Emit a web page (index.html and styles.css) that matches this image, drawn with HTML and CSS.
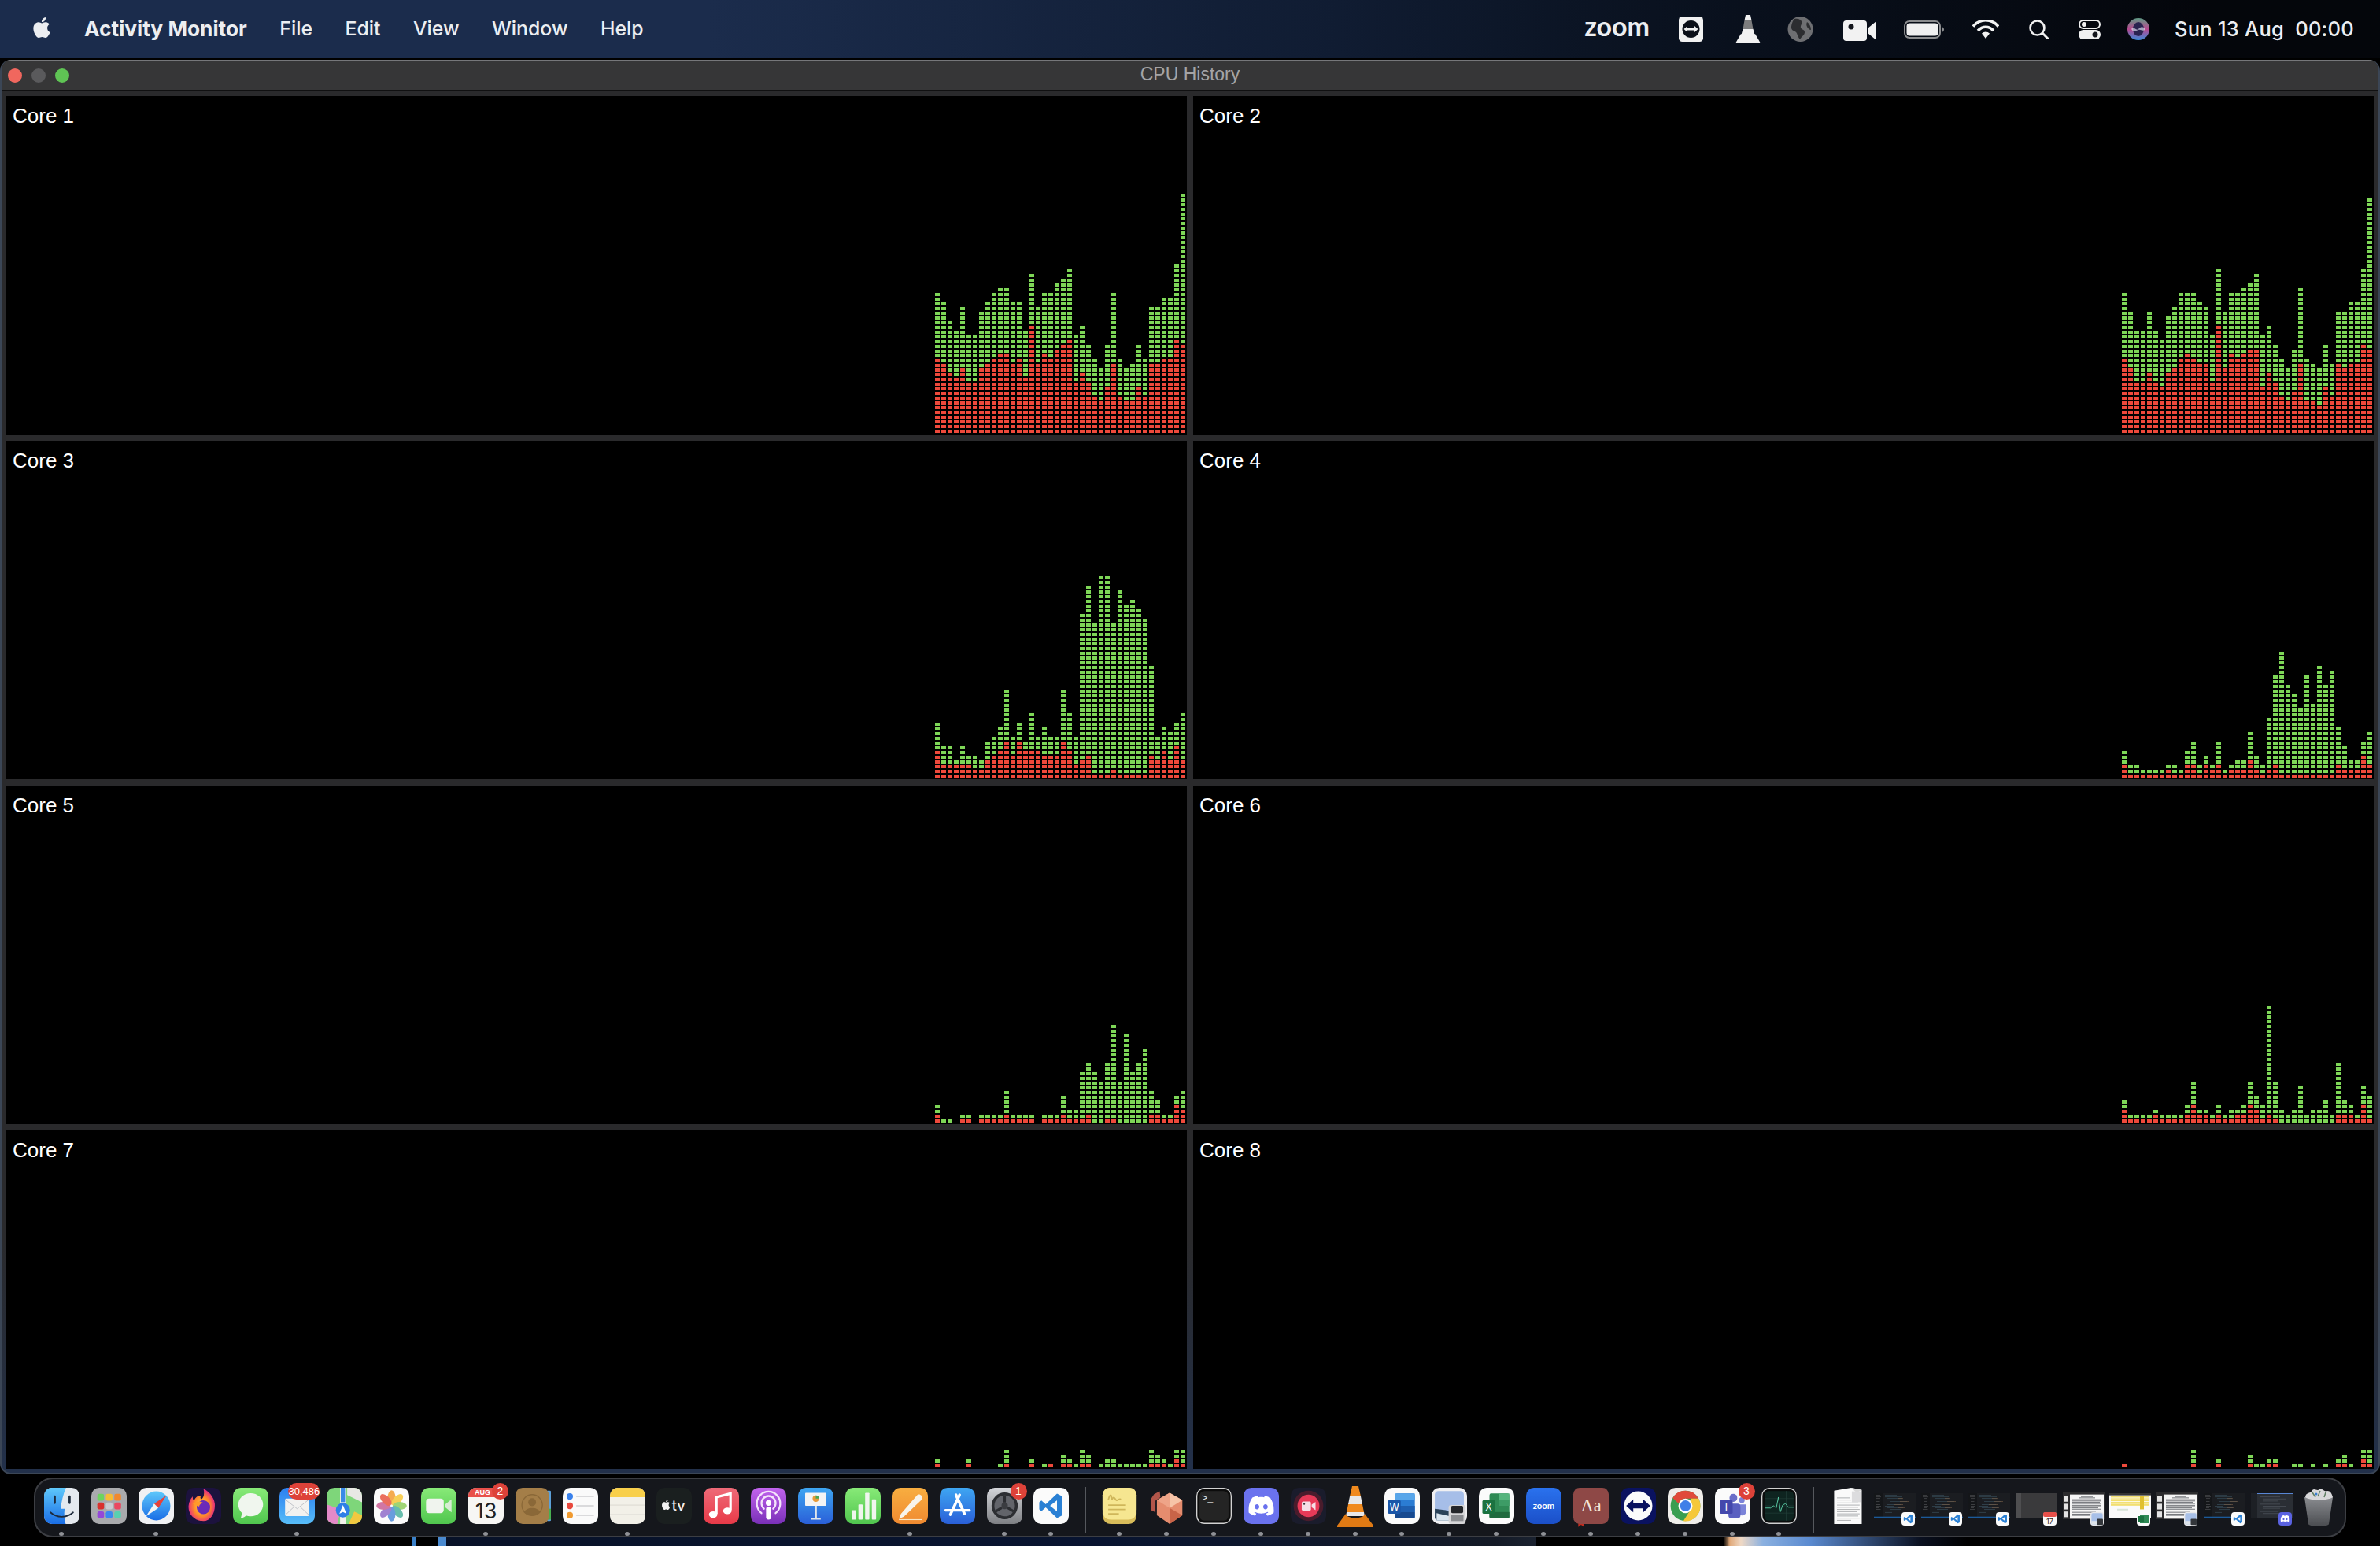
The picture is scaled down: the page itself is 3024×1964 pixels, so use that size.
FILE: index.html
```html
<!DOCTYPE html>
<html lang="en">
<head>
<meta charset="utf-8">
<title>CPU History</title>
<link rel="stylesheet" href="styles.css">
</head>
<body>
<svg class="defs" aria-hidden="true">
  <defs>
    <linearGradient id="gFinder" x1="0" y1="0" x2="0" y2="1"><stop offset="0" stop-color="#5ec8fb"/><stop offset="1" stop-color="#1a6ee6"/></linearGradient>
    <linearGradient id="gBlue" x1="0" y1="0" x2="0" y2="1"><stop offset="0" stop-color="#3ea6f2"/><stop offset="1" stop-color="#2a5fd8"/></linearGradient>
    <linearGradient id="gMail" x1="0" y1="0" x2="0" y2="1"><stop offset="0" stop-color="#2b7ff0"/><stop offset="1" stop-color="#58bdf8"/></linearGradient>
    <linearGradient id="gGreen" x1="0" y1="0" x2="0" y2="1"><stop offset="0" stop-color="#88ea78"/><stop offset="1" stop-color="#50c64e"/></linearGradient>
    <linearGradient id="gMusic" x1="0" y1="0" x2="0" y2="1"><stop offset="0" stop-color="#ee6a78"/><stop offset="1" stop-color="#e83a48"/></linearGradient>
    <linearGradient id="gPod" x1="0" y1="0" x2="0" y2="1"><stop offset="0" stop-color="#c264ee"/><stop offset="1" stop-color="#7a30b8"/></linearGradient>
    <linearGradient id="gPages" x1="0" y1="0" x2="0" y2="1"><stop offset="0" stop-color="#f8ae40"/><stop offset="1" stop-color="#f08a30"/></linearGradient>
    <linearGradient id="gGray" x1="0" y1="0" x2="0" y2="1"><stop offset="0" stop-color="#d4d6da"/><stop offset="1" stop-color="#7e8084"/></linearGradient>
    <linearGradient id="gZoom" x1="0" y1="0" x2="0" y2="1"><stop offset="0" stop-color="#2a72ee"/><stop offset="1" stop-color="#1b4fc8"/></linearGradient>
    <linearGradient id="gTrash" x1="0" y1="0" x2="0" y2="1"><stop offset="0" stop-color="#8a8c90"/><stop offset="1" stop-color="#4a4c50"/></linearGradient>
    <linearGradient id="gSiri" x1="0" y1="0" x2="0" y2="1"><stop offset="0" stop-color="#5f9c86"/><stop offset=".5" stop-color="#b8488f"/><stop offset="1" stop-color="#3a8ad8"/></linearGradient>
    <radialGradient id="gFox" cx=".5" cy=".55"><stop offset="0" stop-color="#ffd84a"/><stop offset=".6" stop-color="#ff8a2a"/><stop offset="1" stop-color="#e8307a"/></radialGradient>
    <symbol id="vsLogo" viewBox="0 0 100 100"><path fill-rule="evenodd" fill="#2a80d4" d="M72 6 92 16V84L72 94 30 56 14 69 6 63V37L14 31 30 44ZM72 30 46 50 72 70Z"/></symbol>
    <symbol id="discordLogo" viewBox="0 0 24 24"><path fill="#fff" d="M20.317 4.37a19.79 19.79 0 0 0-4.885-1.515.074.074 0 0 0-.079.037c-.211.375-.445.865-.608 1.25-1.845-.277-3.68-.277-5.487 0-.164-.394-.406-.875-.618-1.25a.077.077 0 0 0-.079-.037 19.74 19.74 0 0 0-4.885 1.515.07.07 0 0 0-.032.028C.533 9.046-.319 13.58.099 18.058a.082.082 0 0 0 .031.056c2.053 1.508 4.041 2.423 5.993 3.03a.078.078 0 0 0 .084-.028c.462-.63.873-1.295 1.226-1.994a.076.076 0 0 0-.042-.106c-.653-.248-1.274-.55-1.872-.892a.077.077 0 0 1-.008-.128c.126-.094.252-.192.372-.291a.074.074 0 0 1 .078-.011c3.928 1.794 8.18 1.794 12.061 0a.074.074 0 0 1 .079.01c.12.099.246.198.373.292a.077.077 0 0 1-.007.128c-.598.35-1.219.645-1.873.891a.077.077 0 0 0-.041.107c.36.698.772 1.363 1.225 1.993a.076.076 0 0 0 .084.029c1.961-.607 3.95-1.522 6.002-3.03a.077.077 0 0 0 .032-.055c.5-5.177-.838-9.674-3.549-13.66a.061.061 0 0 0-.031-.029ZM8.02 15.331c-1.183 0-2.157-1.086-2.157-2.419 0-1.333.956-2.419 2.157-2.419 1.211 0 2.176 1.095 2.157 2.42 0 1.332-.956 2.418-2.157 2.418Zm7.975 0c-1.183 0-2.157-1.086-2.157-2.419 0-1.333.955-2.419 2.157-2.419 1.21 0 2.176 1.095 2.157 2.42 0 1.332-.946 2.418-2.157 2.418Z"/></symbol>
    <symbol id="appleLogo" viewBox="0 0 24 24"><path d="M12.152 6.896c-.948 0-2.415-1.078-3.96-1.04-2.04.027-3.91 1.183-4.961 3.014-2.117 3.675-.546 9.103 1.519 12.09 1.013 1.454 2.208 3.09 3.792 3.039 1.52-.065 2.09-.987 3.935-.987 1.831 0 2.35.987 3.96.948 1.637-.026 2.676-1.48 3.676-2.948 1.156-1.688 1.636-3.325 1.662-3.415-.039-.013-3.182-1.221-3.22-4.857-.026-3.04 2.48-4.494 2.597-4.559-1.429-2.09-3.623-2.324-4.39-2.376-2-.156-3.675 1.09-4.61 1.09zM15.53 3.83c.843-1.012 1.4-2.427 1.245-3.83-1.207.052-2.662.805-3.532 1.818-.78.896-1.454 2.338-1.273 3.714 1.338.104 2.715-.688 3.559-1.701"/></symbol>
    <symbol id="codeThumb" viewBox="0 0 106 94" preserveAspectRatio="none">
      <rect width="106" height="94" fill="#1b1d21"/><rect width="22" height="94" fill="#141619"/>
      <path d="M4 8h12M4 14h14M6 20h10M6 26h12M6 32h9M4 38h13M6 44h10M6 50h12M6 56h8M4 62h13" stroke="#55575b" stroke-width="1.500"/>
      <path d="M28 8h30M28 14h44M34 20h38M34 26h26M40 32h44M40 38h30M34 44h36M28 50h22M34 56h40M40 62h28M40 68h34M28 74h18" stroke="#3c5462" stroke-width="1.500"/>
      <path d="M60 20h14M66 32h22M52 44h22M60 56h18" stroke="#7a6048" stroke-width="1.500"/>
      <rect y="90" width="106" height="4" fill="#1b5a9a"/>
    </symbol>
    <symbol id="docThumb" viewBox="0 0 106 104" preserveAspectRatio="none">
      <rect width="106" height="104" fill="#2c2c2e"/>
      <rect x="18" y="8" width="86" height="94" fill="#f6f6f6"/>
      <path d="M46 16h30M40 21h42M24 28h74M24 33h74M24 38h70M24 43h74M24 50h74M24 55h74M24 60h66M24 65h74M24 72h74M24 77h60M24 84h74M24 89h50" stroke="#55585e" stroke-width="2"/>
      <rect x="2" y="14" width="12" height="22" fill="#e4e4e4"/><rect x="2" y="44" width="12" height="22" fill="#e4e4e4"/><rect x="2" y="74" width="12" height="22" fill="#e4e4e4"/>
    </symbol>
    <symbol id="previewBadge" viewBox="0 0 100 100">
      <rect width="100" height="100" rx="20" fill="#e8e8ea"/><rect x="8" y="8" width="84" height="84" rx="10" fill="#a8c0e8"/><path d="M8 66h84v26H8z" fill="#dfe4ea"/><rect x="50" y="50" width="44" height="46" rx="6" fill="#33363a"/>
    </symbol>
  </defs>
</svg>

<header class="menubar">
  <svg class="apple" aria-hidden="true"><use href="#appleLogo"/></svg>
  <nav class="menus">
    <span class="app-name">Activity Monitor</span>
    <span>File</span><span>Edit</span><span>View</span><span>Window</span><span>Help</span>
  </nav>
  <div class="status">
    <span class="st-zoom">zoom</span>
    <svg class="st st-tv" viewBox="0 0 31 32"><rect width="31" height="32" rx="4.5" fill="#f1f1f1"/><circle cx="15.5" cy="16" r="11" fill="#0b0f18"/><path d="M6.5 16 11 12v2.6h9V12l4.5 4-4.5 4v-2.6h-9V20z" fill="#f1f1f1"/></svg>
    <svg class="st st-vlc" viewBox="0 0 32 36"><path d="M13 0h6l1.500 7h-9z" fill="#f1f1f1"/><path d="M11.500 7h9l2 11h-13z" fill="#7d7d7d"/><path d="M9.500 18h13l2 7h-17z" fill="#f1f1f1"/><path d="M7 24c3 2 15 2 18 0l7 12H0z" fill="#f1f1f1"/></svg>
    <svg class="st st-globe" viewBox="0 0 33 32"><circle cx="16.500" cy="16" r="16" fill="#6e6f72"/><path d="M9 3c4-1 7 0 9 3s-2 5-1 8 5 2 5 6-4 5-6 9c-3-3-3-7-5-9s-6-2-6-6 2-9 4-11zM25 7c3 2 5 6 5 10-2 0-4-2-5-4s-1-4 0-6z" fill="#2c2d30"/></svg>
    <svg class="st st-video" viewBox="0 0 42 26"><rect width="30" height="26" rx="4" fill="#f2f2f2"/><path d="M31 10 42 1v24L31 16z" fill="#f2f2f2"/><circle cx="10" cy="8" r="3.500" fill="#14161c"/></svg>
    <svg class="st st-batt" viewBox="0 0 51 23"><rect x="1" y="1" width="45" height="21" rx="6" fill="none" stroke="#8b8c8e" stroke-width="2"/><rect x="3.500" y="3.500" width="40" height="16" rx="4" fill="#f0f0f0"/><path d="M48 8c2 .5 3 2 3 3.500s-1 3-3 3.500z" fill="#8b8c8e"/></svg>
    <svg class="st st-wifi" viewBox="0 0 34 24"><path d="M1 8.500C10-2 24-2 33 8.500M7 14c6-6.500 14-6.500 20 0" fill="none" stroke="#f2f2f2" stroke-width="3.500"/><path d="M12 17.500c3-2.800 7-2.800 10 0L17 24z" fill="#f2f2f2"/></svg>
    <svg class="st st-search" viewBox="0 0 26 25"><circle cx="10.500" cy="10.500" r="9" fill="none" stroke="#f0f0f0" stroke-width="2.600"/><path d="m17 17 8 8" stroke="#f0f0f0" stroke-width="3"/></svg>
    <svg class="st st-ctrl" viewBox="0 0 28 25"><rect x="1" y="1" width="26" height="10" rx="5" fill="none" stroke="#f0f0f0" stroke-width="2"/><circle cx="7" cy="6" r="3" fill="#f0f0f0"/><rect y="13" width="28" height="12" rx="6" fill="#f0f0f0"/><circle cx="21" cy="19" r="3.500" fill="#14161c"/></svg>
    <svg class="st st-siri" viewBox="0 0 28 28"><circle cx="14" cy="14" r="14" fill="url(#gSiri)"/><ellipse cx="14" cy="14" rx="7" ry="9" fill="#2a2350"/><path d="M5 14c3-5 6 3 9 0s5-4 9 0c-3 4-6 0-9 1s-6 4-9-1z" fill="#d8d8ea" opacity=".7"/></svg>
    <span class="clock">Sun 13 Aug&nbsp;&nbsp;00:00</span>
  </div>
</header>

<main class="window">
  <div class="titlebar">
    <div class="lights"><i class="light red"></i><i class="light off"></i><i class="light green"></i></div>
    <span class="win-title">CPU History</span>
  </div>
  <div class="grid">
    <section class="panel"><h2>Core 1</h2><div class="graph" data-core="0"></div></section>
    <section class="panel"><h2>Core 2</h2><div class="graph" data-core="1"></div></section>
    <section class="panel"><h2>Core 3</h2><div class="graph" data-core="2"></div></section>
    <section class="panel"><h2>Core 4</h2><div class="graph" data-core="3"></div></section>
    <section class="panel"><h2>Core 5</h2><div class="graph" data-core="4"></div></section>
    <section class="panel"><h2>Core 6</h2><div class="graph" data-core="5"></div></section>
    <section class="panel"><h2>Core 7</h2><div class="graph" data-core="6"></div></section>
    <section class="panel"><h2>Core 8</h2><div class="graph" data-core="7"></div></section>
  </div>
</main>

<footer class="dock">
  <div class="item run"><svg viewBox="0 0 100 100" preserveAspectRatio="none"><rect width="100" height="100" rx="22" fill="#e4e9ef"/><path d="M22 0H62C54 18 49 38 47 58H58C56 74 57 88 61 100H22A22 22 0 0 1 0 78V22A22 22 0 0 1 22 0Z" fill="url(#gFinder)"/><path d="M30 24v18M72 24v18" stroke="#1d2a3c" stroke-width="6" stroke-linecap="round"/><path d="M18 68c18 16 46 16 64 0" fill="none" stroke="#1d2a3c" stroke-width="4" stroke-linecap="round"/></svg></div>
  <div class="item"><svg viewBox="0 0 100 100" preserveAspectRatio="none"><rect width="100" height="100" rx="22" fill="#a9aaad"/><rect x="17" y="17" width="19" height="19" rx="5" fill="#6cd45e"/><rect x="41" y="17" width="19" height="19" rx="5" fill="#f6bd35"/><rect x="65" y="17" width="19" height="19" rx="5" fill="#f0882e"/><rect x="17" y="41" width="19" height="19" rx="5" fill="#d9302c"/><rect x="41" y="41" width="19" height="19" rx="5" fill="#c8cbd0"/><rect x="65" y="41" width="19" height="19" rx="5" fill="#ea4860"/><rect x="17" y="65" width="19" height="19" rx="5" fill="#9448d8"/><rect x="41" y="65" width="19" height="19" rx="5" fill="#3a88f0"/><rect x="65" y="65" width="19" height="19" rx="5" fill="#58d0b0"/></svg></div>
  <div class="item run"><svg viewBox="0 0 100 100" preserveAspectRatio="none"><rect width="100" height="100" rx="22" fill="#f0f1f3"/><circle cx="50" cy="50" r="40" fill="url(#gFinder)"/><path d="M79 21 44 44 56 56z" fill="#e8413a"/><path d="M21 79 44 44 56 56z" fill="#f4f4f4"/></svg></div>
  <div class="item"><svg viewBox="0 0 100 100" preserveAspectRatio="none"><rect width="100" height="100" rx="22" fill="#1c123e"/><path d="M50 92C24 92 6 72 8 50c1-12 6-20 12-26-1 6 1 10 4 12 3-10 10-14 20-14-4 4-3 7 0 10 6-4 10-14 6-30 14 8 30 22 32 42 2 26-12 48-32 48z" fill="url(#gFox)"/><circle cx="50" cy="54" r="19" fill="#6a2ab8"/><path d="M20 44c8-6 24-8 32 0-8-2-14 2-14 8-6-2-12-4-18-8z" fill="#ff9a2a"/></svg></div>
  <div class="item"><svg viewBox="0 0 100 100" preserveAspectRatio="none"><rect width="100" height="100" rx="22" fill="url(#gGreen)"/><ellipse cx="50" cy="47" rx="35" ry="32" fill="#f0f6ee"/><path d="M26 68 22 84c8-1 14-5 18-10z" fill="#f0f6ee"/></svg></div>
  <div class="item run"><svg viewBox="0 0 100 100" preserveAspectRatio="none"><rect width="100" height="100" rx="22" fill="url(#gMail)"/><rect x="16" y="30" width="68" height="48" rx="4" fill="#f2f2f0"/><path d="M16 32 50 58 84 32M16 76 42 52M84 76 58 52" fill="none" stroke="#b8bcc2" stroke-width="2"/></svg><span class="badge wide">30,486</span></div>
  <div class="item"><svg viewBox="0 0 100 100" preserveAspectRatio="none"><rect width="100" height="100" rx="22" fill="#7ed67a"/><path d="M0 46 40 60 30 100H22A22 22 0 0 1 0 78z" fill="#e48ac8"/><path d="M58 0H78A22 22 0 0 1 100 22V40L58 20z" fill="#e8e8e4"/><path d="M62 100H78A22 22 0 0 0 100 78V76L78 66z" fill="#f2c840"/><path d="M38 0H54V100H38z" fill="#f4f2ec"/><path d="M40 0h12v40H40z" fill="#3a8ae8"/><circle cx="46" cy="62" r="20" fill="#2f7fe8"/><path d="M46 48 56 72 46 67 36 72z" fill="#fff"/></svg></div>
  <div class="item"><svg viewBox="0 0 100 100" preserveAspectRatio="none"><rect width="100" height="100" rx="22" fill="#fbfbfb"/><g transform="translate(50 50)" opacity=".82"><ellipse cy="-23" rx="11" ry="20" fill="#f39a2c"/><ellipse cy="-23" rx="11" ry="20" fill="#f7c634" transform="rotate(45)"/><ellipse cy="-23" rx="11" ry="20" fill="#8ccc58" transform="rotate(90)"/><ellipse cy="-23" rx="11" ry="20" fill="#48b09c" transform="rotate(135)"/><ellipse cy="-23" rx="11" ry="20" fill="#4a88d8" transform="rotate(180)"/><ellipse cy="-23" rx="11" ry="20" fill="#8c68c8" transform="rotate(225)"/><ellipse cy="-23" rx="11" ry="20" fill="#c85a90" transform="rotate(270)"/><ellipse cy="-23" rx="11" ry="20" fill="#e8503c" transform="rotate(315)"/></g></svg></div>
  <div class="item"><svg viewBox="0 0 100 100" preserveAspectRatio="none"><rect width="100" height="100" rx="22" fill="url(#gGreen)"/><rect x="14" y="30" width="50" height="40" rx="9" fill="#f0f4ee"/><path d="M68 46 86 32V68L68 54z" fill="#d8ecd4"/></svg></div>
  <div class="item run"><svg viewBox="0 0 100 100" preserveAspectRatio="none"><rect width="100" height="100" rx="22" fill="#f7f6f4"/><path d="M0 26V22A22 22 0 0 1 22 0H78A22 22 0 0 1 100 22V26z" fill="#e8504a"/><text class="cal-mon" x="40" y="20">AUG</text><text class="cal-day" x="50" y="84">13</text></svg><span class="badge">2</span></div>
  <div class="item"><svg viewBox="0 0 100 100" preserveAspectRatio="none"><rect x="88" y="8" width="12" height="84" rx="3" fill="#5ca0d8"/><rect x="90" y="58" width="10" height="30" fill="#48b050"/><rect width="94" height="100" rx="20" fill="#a47e48"/><circle cx="47" cy="48" r="29" fill="none" stroke="#8a6838" stroke-width="3"/><circle cx="47" cy="40" r="11" fill="#8a6838"/><path d="M24 68c6-16 40-16 46 0-12 10-34 10-46 0z" fill="#8a6838"/></svg></div>
  <div class="item"><svg viewBox="0 0 100 100" preserveAspectRatio="none"><rect width="100" height="100" rx="22" fill="#fafafa"/><circle cx="20" cy="24" r="9" fill="#3a82ec"/><circle cx="20" cy="50" r="9" fill="#e8483c"/><circle cx="20" cy="76" r="9" fill="#f09a30"/><path d="M38 24h50M38 50h50M38 76h50" stroke="#d0d0d2" stroke-width="3"/></svg></div>
  <div class="item run"><svg viewBox="0 0 100 100" preserveAspectRatio="none"><rect width="100" height="100" rx="22" fill="#f2f0e8"/><path d="M0 26V22A22 22 0 0 1 22 0H78A22 22 0 0 1 100 22V26z" fill="#f8cf4a"/><path d="M0 48h100M0 74h100" stroke="#d8d6ce" stroke-width="2"/></svg></div>
  <div class="item"><svg viewBox="0 0 100 100" preserveAspectRatio="none"><rect width="100" height="100" rx="22" fill="#1a1f1f"/><use href="#appleLogo" x="13" y="30" width="28" height="34" fill="#f2f2f2"/><text class="tv-text" x="44" y="62">tv</text></svg></div>
  <div class="item"><svg viewBox="0 0 100 100" preserveAspectRatio="none"><rect width="100" height="100" rx="22" fill="url(#gMusic)"/><path d="M36 72V26L76 16V62" fill="none" stroke="#fff" stroke-width="7"/><ellipse cx="27" cy="74" rx="12" ry="9" fill="#fff"/><ellipse cx="67" cy="64" rx="12" ry="9" fill="#fff"/></svg></div>
  <div class="item"><svg viewBox="0 0 100 100" preserveAspectRatio="none"><rect width="100" height="100" rx="22" fill="url(#gPod)"/><path d="M30 70a33 33 0 1 1 40 0M37 58a20 20 0 1 1 26 0" fill="none" stroke="#f4e4fb" stroke-width="5" stroke-linecap="round"/><circle cx="50" cy="42" r="8" fill="#fff"/><rect x="43" y="52" width="14" height="36" rx="7" fill="#fff"/></svg></div>
  <div class="item"><svg viewBox="0 0 100 100" preserveAspectRatio="none"><rect width="100" height="100" rx="22" fill="url(#gBlue)"/><rect x="20" y="14" width="60" height="36" rx="2" fill="#f4f4f4"/><circle cx="50" cy="30" r="9" fill="#e89a38"/><path d="M50 30V21A9 9 0 0 1 59 30z" fill="#48a858"/><path d="M47 50h6v36h-6zM36 84h28v4H36z" fill="#dfe5ec"/></svg></div>
  <div class="item"><svg viewBox="0 0 100 100" preserveAspectRatio="none"><rect width="100" height="100" rx="22" fill="url(#gGreen)"/><rect x="18" y="62" width="12" height="26" rx="2" fill="#f0f6ee"/><rect x="37" y="46" width="12" height="42" rx="2" fill="#f0f6ee"/><rect x="56" y="14" width="12" height="74" rx="2" fill="#f0f6ee"/><rect x="75" y="32" width="12" height="56" rx="2" fill="#f0f6ee"/></svg></div>
  <div class="item run"><svg viewBox="0 0 100 100" preserveAspectRatio="none"><rect width="100" height="100" rx="22" fill="url(#gPages)"/><path d="M82 22c4 4 2 8-1 12L32 80l-14 6 6-14L70 20c4-3 8-2 12 2z" fill="#f8f4ea"/><path d="M18 88h66" stroke="#f8e6c4" stroke-width="2.500"/></svg></div>
  <div class="item"><svg viewBox="0 0 100 100" preserveAspectRatio="none"><rect width="100" height="100" rx="22" fill="url(#gBlue)"/><path d="M56 20 30 74M46 20 70 72" stroke="#fff" stroke-width="8" stroke-linecap="round"/><path d="M16 62H84" stroke="#fff" stroke-width="7" stroke-linecap="round"/></svg></div>
  <div class="item run"><svg viewBox="0 0 100 100" preserveAspectRatio="none"><rect width="100" height="100" rx="22" fill="url(#gGray)"/><circle cx="50" cy="50" r="37" fill="#2c2e32"/><circle cx="50" cy="50" r="29" fill="#62646a"/><circle cx="50" cy="50" r="9" fill="#3a3c40"/><path d="M50 21v20M25 65l17-10M75 65l-17-10" stroke="#2c2e32" stroke-width="7"/></svg><span class="badge">1</span></div>
  <div class="item run"><svg viewBox="0 0 100 100" preserveAspectRatio="none"><rect width="100" height="100" rx="22" fill="#fbfbfb"/><use href="#vsLogo" x="12" y="12" width="76" height="76"/></svg></div>
  <i class="sep"></i>
  <div class="item run"><svg viewBox="0 0 100 100" preserveAspectRatio="none"><path d="M2 70V20A20 20 0 0 1 22 0H78A20 20 0 0 1 98 20V70C98 90 90 100 74 100H26C10 100 2 90 2 70z" fill="#d8bc5a"/><path d="M2 60V20A20 20 0 0 1 22 0H78A20 20 0 0 1 98 20V60C98 80 90 88 74 88H26C10 88 2 80 2 60z" fill="#f6e690"/><path d="M18 34c6-22 10-14 10 0 6-14 8-4 12 0s8-6 14-2M18 48h50M18 60h50M18 72h30" fill="none" stroke="#cfb65a" stroke-width="4"/></svg></div>
  <div class="item run"><svg viewBox="0 0 100 100" preserveAspectRatio="none"><path d="M30 10 14 18 6 30v32l12 6V36l14-10z" fill="#b2564a"/><path d="M58 14 94 34V76L58 100 22 76V34z" fill="#e58c6e"/><path d="M58 14 94 34 58 56z" fill="#f6c4a8"/><path d="M58 14 22 34 58 56z" fill="#eea488"/><path d="M58 56 94 76 58 100z" fill="#c86448"/></svg></div>
  <div class="item run"><svg viewBox="0 0 100 100" preserveAspectRatio="none"><rect x="1.500" y="1.500" width="97" height="97" rx="21" fill="#0c0c0c" stroke="#d2d2d2" stroke-width="3"/><rect x="9" y="9" width="82" height="82" rx="14" fill="#242424"/><text class="term" x="16" y="36">&gt;_</text></svg></div>
  <div class="item run"><svg viewBox="0 0 100 100" preserveAspectRatio="none"><rect width="100" height="100" rx="22" fill="#6a72ee"/><use href="#discordLogo" x="14" y="14" width="72" height="72"/></svg></div>
  <div class="item run"><svg viewBox="0 0 100 100" preserveAspectRatio="none"><rect width="100" height="100" rx="22" fill="#1a1c2c"/><circle cx="50" cy="50" r="42" fill="#4a1c2c"/><circle cx="50" cy="50" r="31" fill="#e83a58"/><rect x="31" y="38" width="26" height="25" rx="4" fill="#f6dfe6"/><path d="M59 47 70 39V62L59 54z" fill="#f6dfe6"/><circle cx="38" cy="45" r="2.500" fill="#333"/></svg></div>
  <div class="item run"><svg class="vlc" viewBox="0 0 46 52" preserveAspectRatio="none"><path d="M19 0h8l3 13H16z" fill="#f08a1e"/><path d="M16 13h14l2 10H14z" fill="#e8e8e8"/><path d="M14 23h18l2 10H12z" fill="#f08a1e"/><path d="M12 33h22l1 5H11z" fill="#e8e8e8"/><path d="M11 35c0 7 24 7 24 0l11 15v2H0v-2z" fill="#e07a14"/></svg></div>
  <div class="item run"><svg viewBox="0 0 100 100" preserveAspectRatio="none"><rect width="100" height="100" rx="22" fill="#fbfbfb"/><rect x="30" y="16" width="56" height="68" rx="5" fill="#2b7cd3"/><rect x="30" y="16" width="56" height="17" fill="#58a6ea"/><rect x="30" y="50" width="56" height="17" fill="#1f5fb0"/><rect x="30" y="67" width="56" height="17" fill="#174a90"/><rect x="10" y="34" width="36" height="38" rx="4" fill="#1a56a8"/><text class="app-l" x="28" y="63">W</text></svg></div>
  <div class="item run"><svg viewBox="0 0 100 100" preserveAspectRatio="none"><rect width="100" height="100" rx="22" fill="#f0f0f2"/><rect x="9" y="9" width="82" height="82" rx="10" fill="#a6bee8"/><path d="M9 58 40 62 74 76V91H19A10 10 0 0 1 9 81z" fill="#2a4258"/><path d="M14 70 50 78 60 91H14z" fill="#d8e4ee"/><rect x="48" y="48" width="48" height="52" rx="7" fill="#d6d6d8"/><rect x="55" y="50" width="34" height="20" rx="4" fill="#24262a"/><rect x="54" y="76" width="36" height="16" fill="#8a8c90"/></svg></div>
  <div class="item run"><svg viewBox="0 0 100 100" preserveAspectRatio="none"><rect width="100" height="100" rx="22" fill="#fbfbfb"/><rect x="30" y="16" width="56" height="68" rx="5" fill="#2f8a55"/><rect x="56" y="16" width="30" height="17" fill="#56b57e"/><rect x="56" y="33" width="30" height="17" fill="#3d9c66"/><rect x="30" y="67" width="56" height="17" fill="#1f6a3e"/><rect x="10" y="34" width="36" height="38" rx="4" fill="#1b7240"/><text class="app-l" x="28" y="63">X</text></svg></div>
  <div class="item run"><svg viewBox="0 0 100 100" preserveAspectRatio="none"><rect width="100" height="100" rx="22" fill="url(#gZoom)"/><text class="zoom-t" x="50" y="58">zoom</text></svg></div>
  <div class="item run"><svg viewBox="0 0 100 100" preserveAspectRatio="none"><path d="M14 92 14 108 22 102 30 108 30 92z" fill="#c02c20"/><rect width="100" height="100" rx="18" fill="#8e4846"/><text class="dict" x="50" y="66">Aa</text></svg></div>
  <div class="item run"><svg viewBox="0 0 100 100" preserveAspectRatio="none"><rect width="100" height="100" rx="22" fill="#0a1260"/><circle cx="50" cy="50" r="40" fill="#fbfbfb"/><path d="M16 50 36 32V43H64V32L84 50 64 68V57H36V68z" fill="#0a1260"/></svg></div>
  <div class="item run"><svg viewBox="0 0 100 100" preserveAspectRatio="none"><rect width="100" height="100" rx="22" fill="#f0eeea"/><circle cx="50" cy="50" r="42" fill="#3a9e50"/><path d="M50 8A42 42 0 0 1 87 30H50A20 20 0 0 0 31 44L14 28A42 42 0 0 1 50 8z" fill="#e04a3a"/><path d="M87 30A42 42 0 0 1 44 92L62 64A20 20 0 0 0 66 38V30z" fill="#f5c83a"/><circle cx="50" cy="50" r="20" fill="#fff"/><circle cx="50" cy="50" r="15" fill="#3f7fe8"/></svg></div>
  <div class="item run"><svg viewBox="0 0 100 100" preserveAspectRatio="none"><rect width="100" height="100" rx="22" fill="#fbfbfb"/><circle cx="52" cy="28" r="11" fill="#6a6ec8"/><circle cx="76" cy="34" r="8" fill="#7b83d8"/><path d="M66 46H88V66C88 78 70 80 66 70z" fill="#7b83d8"/><rect x="38" y="44" width="34" height="40" rx="8" fill="#5a60c0"/><rect x="14" y="34" width="36" height="38" rx="4" fill="#4448ac"/><text class="app-l" x="32" y="63">T</text></svg><span class="badge">3</span></div>
  <div class="item run"><svg viewBox="0 0 100 100" preserveAspectRatio="none"><rect x="1.500" y="1.500" width="97" height="97" rx="21" fill="#0a0c0c" stroke="#d0d0d0" stroke-width="3"/><rect x="9" y="9" width="82" height="82" rx="12" fill="#0e2420"/><path d="M9 30h82M9 50h82M9 70h82M30 9v82M50 9v82M70 9v82" stroke="#22403a" stroke-width="1.500"/><path d="M9 56H26L34 50 42 56 48 26 54 66 60 48 68 44 76 54H91" fill="none" stroke="#5ad0a8" stroke-width="2"/></svg></div>
  <i class="sep"></i>
  <div class="item"><svg viewBox="0 0 100 100" preserveAspectRatio="none"><path d="M12 8 60 0 90 6V100H12z" fill="#fafafa"/><path d="M60 0 76 14 90 6z" fill="#d8d8d8"/><rect x="62" y="10" width="26" height="30" fill="#dcdcde"/><path d="M20 28h36M20 34h40M20 42h60M20 48h64M20 54h60M20 60h64M20 66h56M20 72h64M20 78h60M20 84h64M20 90h40" stroke="#8b8d91" stroke-width="1.500"/></svg></div>
  <div class="item thumb"><svg class="shot"><use href="#codeThumb"/></svg><svg class="mini"><rect width="17" height="17" rx="4" fill="#fbfbfb"/><use href="#vsLogo" x="2" y="2" width="13" height="13"/></svg></div>
  <div class="item thumb"><svg class="shot"><use href="#codeThumb"/></svg><svg class="mini"><rect width="17" height="17" rx="4" fill="#fbfbfb"/><use href="#vsLogo" x="2" y="2" width="13" height="13"/></svg></div>
  <div class="item thumb"><svg class="shot"><use href="#codeThumb"/></svg><svg class="mini"><rect width="17" height="17" rx="4" fill="#fbfbfb"/><use href="#vsLogo" x="2" y="2" width="13" height="13"/></svg></div>
  <div class="item thumb"><svg class="shot" viewBox="0 0 106 94" preserveAspectRatio="none"><rect width="106" height="94" fill="#3a3a3c"/><rect width="14" height="94" fill="#4e4e50"/></svg><svg class="mini" viewBox="0 0 17 17"><rect width="17" height="17" rx="4" fill="#fafafa"/><rect width="17" height="6" rx="2" fill="#e8504a"/><text class="mini-day" x="8.500" y="15">17</text></svg></div>
  <div class="item thumb"><svg class="shot tall"><use href="#docThumb"/></svg><svg class="mini"><use href="#previewBadge" width="17" height="17"/></svg></div>
  <div class="item thumb"><svg class="shot" viewBox="0 0 106 94" preserveAspectRatio="none"><rect width="106" height="94" fill="#fafafa"/><rect width="106" height="8" fill="#333"/><rect x="4" y="12" width="98" height="36" fill="#f2df70"/><path d="M4 18h98M4 25h98M4 32h98M4 39h98" stroke="#fff" stroke-width="2"/><rect x="78" y="12" width="10" height="50" fill="#e0c030"/><rect x="20" y="60" width="28" height="6" fill="#d8e4d8"/></svg><svg class="mini"><rect width="17" height="17" rx="4" fill="#fbfbfb"/><rect x="4" y="3" width="11" height="11" fill="#2f8a55"/><rect x="2" y="5" width="7" height="7" fill="#1b7240"/></svg></div>
  <div class="item thumb"><svg class="shot tall"><use href="#docThumb"/></svg><svg class="mini"><use href="#previewBadge" width="17" height="17"/></svg></div>
  <div class="item thumb"><svg class="shot"><use href="#codeThumb"/></svg><svg class="mini"><rect width="17" height="17" rx="4" fill="#fbfbfb"/><use href="#vsLogo" x="2" y="2" width="13" height="13"/></svg></div>
  <div class="item thumb"><svg class="shot" viewBox="0 0 106 94" preserveAspectRatio="none"><rect width="106" height="94" fill="#2a2e34"/><rect width="106" height="3" fill="#5a88d8"/><rect width="16" height="94" fill="#1d2025"/><path d="M24 14h50M30 22h60M30 30h40M24 42h50M30 50h60M30 58h44M24 70h46M30 78h56" stroke="#565c64" stroke-width="1.500"/></svg><svg class="mini"><rect width="17" height="17" rx="4" fill="#5a62e0"/><use href="#discordLogo" x="2.500" y="2.500" width="12" height="12"/></svg></div>
  <div class="item trash"><svg viewBox="0 0 40 50" preserveAspectRatio="none"><path d="M2 12 7 46C8 50 32 50 33 46L38 12z" fill="url(#gTrash)"/><path d="M3 12C4 5 10 8 12 3 15 0 18 5 21 2 25 0 27 6 31 4 36 4 37 9 38 12 30 17 10 17 3 12z" fill="#d8d8da"/><path d="M12 6l4 6M22 4l-3 7M29 6l-2 6" stroke="#5e7e62" stroke-width="1.500"/><circle cx="17" cy="8" r="1.500" fill="#3a7fd0"/></svg></div>
</footer>
<script src="script.js"></script>
</body>
</html>
```
FILE: styles.css
```css
* { box-sizing: border-box; }
html, body { margin: 0; }
body {
  width: 3024px;
  height: 1964px;
  overflow: hidden;
  display: flex;
  flex-direction: column;
  font-family: "Liberation Sans", Arial, sans-serif;
  background:
    linear-gradient(90deg, #000 0 523px, #3a80c8 523px 528px, #000 528px 557px, #4a8ad0 557px 567px, #081228 567px, #081430 1400px, #141a26 1900px, #1a2230 1952px, #000 1952px 2190px, #e0a878 2198px, #efd8c4 2212px, #8ab0e0 2240px, #5a8ad0 2300px, #0a1020 2440px, #000 2500px) bottom / 100% 11px no-repeat,
    #000;
}
.defs { position: absolute; width: 0; height: 0; }

/* menu bar */
.menubar {
  flex: none;
  height: 74px;
  display: flex;
  align-items: center;
  padding-left: 40px;
  padding-right: 33px;
  background: linear-gradient(90deg, #1b2c4c 0, #1b2c4c 900px, #101c32 1700px, #0a1220 2100px, #04060b 2800px);
  color: #eceef1;
  font-family: Inter, "Liberation Sans", sans-serif;
  font-size: 25.500px;
  font-weight: 500;
}
.apple { width: 26px; height: 32px; fill: #eceef1; margin-top: -4px; }
.menus { display: flex; gap: 41.500px; margin: -2px 0 0 41px; font-size: 24.800px; }
.app-name { font-size: 26.300px; font-weight: 700; }
.status { margin-left: auto; display: flex; align-items: center; }
.st-zoom { font-family: Lato, sans-serif; font-size: 34px; font-weight: 700; line-height: 1; margin-top: -8px; }
.st { flex: none; display: block; }
.st-tv { width: 31px; height: 32px; margin-left: 37px; }
.st-vlc { width: 32px; height: 36px; margin-left: 41px; }
.st-globe { width: 33px; height: 32px; margin-left: 34px; }
.st-video { width: 42px; height: 26px; margin-left: 38px; margin-top: 4px; }
.st-batt { width: 51px; height: 23px; margin-left: 35px; }
.st-wifi { width: 34px; height: 24px; margin-left: 36px; }
.st-search { width: 26px; height: 25px; margin-left: 38px; }
.st-ctrl { width: 28px; height: 25px; margin-left: 37px; }
.st-siri { width: 28px; height: 28px; margin-left: 34px; }
.clock { margin: -2px 0 0 32px; font-size: 25.500px; letter-spacing: .25px; white-space: pre; }

/* window */
.window {
  flex: none;
  margin-top: 2px;
  height: 1797px;
  border-radius: 14px;
  overflow: hidden;
  display: flex;
  flex-direction: column;
  background: linear-gradient(180deg, #2a2a2c 0, #2a2a2c 1500px, #22304a 1790px);
  border: 2px solid #3b4656;
  border-top: 0;
}
.titlebar {
  flex: none;
  height: 40px;
  padding-bottom: 3px;
  display: flex;
  align-items: center;
  justify-content: center;
  position: relative;
  background: #363637;
  border-top: 2px solid #76777a;
  border-bottom: 2px solid #101011;
}
.lights { position: absolute; left: 8px; top: 9px; display: flex; gap: 12px; }
.light { width: 18px; height: 18px; border-radius: 50%; }
.light.red { background: #f0675e; }
.light.off { background: #5a5a5c; }
.light.green { background: #5fc454; }
.win-title { color: #a4a4a6; font-size: 23px; }
.grid {
  flex: none;
  display: grid;
  grid-template-columns: 1500px 1500px;
  grid-auto-rows: 430px;
  gap: 8px;
  padding: 6px 6px 0;
}
.panel {
  position: relative;
  background: #000;
  display: flex;
  flex-direction: column;
  overflow: hidden;
}
.panel h2 {
  margin: 10px 0 0 8px;
  font-size: 26px;
  font-weight: 400;
  line-height: 30px;
  color: #fff;
}
.graph {
  margin-top: auto;
  height: 380px;
  padding-right: 2px;
  display: flex;
  justify-content: flex-end;
  align-items: flex-end;
  gap: 2px;
}
.col { width: 6px; display: flex; flex-direction: column; }
.seg-g { background: repeating-linear-gradient(180deg, #7ed657 0 4px, transparent 4px 6px); }
.seg-r { background: repeating-linear-gradient(180deg, #ee493b 0 4px, transparent 4px 6px); }

/* dock */
.dock {
  flex: none;
  margin: 4px 0 0 43px;
  width: 2938px;
  height: 76px;
  padding: 11px 0 0 11px;
  display: flex;
  align-items: flex-start;
  gap: 14.880px;
  border: 2px solid #3c3e43;
  border-radius: 24px;
  background: #15171c;
}
.item { position: relative; flex: none; width: 45px; height: 46px; }
.item > svg { display: block; width: 100%; height: 100%; overflow: visible; }
.item.run::after {
  content: "";
  position: absolute;
  left: 19px;
  top: 56px;
  width: 6px;
  height: 5px;
  border-radius: 50%;
  background: #8f9196;
}
.sep { flex: none; width: 2px; height: 58px; margin: -1px 5px 0; background: #55585d; }
.badge {
  position: absolute;
  right: -6px;
  top: -6px;
  min-width: 21px;
  height: 21px;
  border-radius: 11px;
  background: #dd4239;
  color: #fff;
  font-size: 14px;
  line-height: 21px;
  text-align: center;
}
.badge.wide { right: -6px; width: 40px; font-size: 13px; }
.item > svg.vlc { position: absolute; left: -1px; top: -2px; width: 46px; height: 52px; }
.item.thumb > svg.shot { position: absolute; left: -4px; top: 7px; width: 53px; height: 31px; }
.item.thumb > svg.shot.tall { top: 6px; height: 34px; }
.item.thumb > svg.mini { position: absolute; left: 31px; top: 31px; width: 17px; height: 17px; }
.item.trash > svg { position: absolute; left: 2px; top: 0; width: 40px; height: 50px; }

/* text inside dock icons */
.cal-mon { font: 700 20px "Liberation Sans", sans-serif; fill: #fff; text-anchor: middle; }
.cal-day { font: 400 60px Inter, sans-serif; fill: #222; text-anchor: middle; }
.tv-text { font: 500 40px Inter, sans-serif; fill: #f2f2f2; }
.term { font: 400 26px "Liberation Mono", monospace; fill: #e8e8e8; }
.app-l { font: 400 28px Inter, sans-serif; fill: #fff; text-anchor: middle; }
.zoom-t { font: 700 25px Lato, sans-serif; fill: #fff; text-anchor: middle; }
.dict { font: 400 50px "Liberation Serif", serif; fill: #f2e6dc; text-anchor: middle; }
.mini-day { font: 400 9px Inter, sans-serif; fill: #222; text-anchor: middle; }
```
FILE: script.js
```js
// [total, red] cell counts per sample (40 samples), one row per CPU core.
const CORES = [
  { t: [30,28,24,22,27,21,21,26,28,30,31,31,28,28,22,34,27,30,30,32,33,35,21,23,19,16,14,19,30,16,14,15,19,16,27,27,29,29,36,51],
    r: [16,15,13,12,14,11,11,14,15,16,17,17,15,16,12,23,15,17,16,18,19,20,11,13,11,8,7,10,15,8,7,7,10,8,15,15,16,16,20,19] },
  { t: [30,26,22,22,26,22,20,25,27,30,30,30,28,27,21,35,26,30,30,31,32,34,21,23,19,16,14,18,31,16,15,14,19,15,26,26,28,28,35,50],
    r: [16,14,11,11,13,11,10,13,14,16,17,16,15,15,11,23,14,17,16,17,18,18,10,13,11,8,7,9,15,7,7,6,10,8,15,14,15,15,19,18] },
  { t: [12,7,7,4,7,5,5,4,8,9,11,19,9,12,8,14,9,11,9,9,19,14,9,35,41,33,43,43,33,40,37,38,36,34,24,9,11,10,12,14],
    r: [6,3,3,3,3,3,2,2,4,5,6,8,5,8,6,6,6,5,5,5,8,6,3,4,5,1,1,1,2,1,1,1,1,1,5,4,6,4,7,4] },
  { t: [6,3,3,2,2,2,2,3,3,2,6,8,3,5,3,8,2,3,4,4,10,5,3,13,22,27,20,18,15,22,16,24,20,23,11,7,4,4,8,10],
    r: [3,1,1,1,1,1,1,2,1,1,3,3,1,3,2,3,1,2,2,2,4,2,1,2,3,1,1,1,1,1,1,1,1,1,3,2,2,2,5,3] },
  { t: [4,1,1,0,2,2,0,2,2,2,2,7,2,2,2,2,0,2,2,2,6,3,3,11,13,11,9,13,21,9,19,11,13,16,7,5,2,2,6,7],
    r: [2,0,0,0,1,1,0,1,1,1,1,2,1,1,1,1,0,1,1,1,2,1,1,1,2,0,0,1,1,0,0,0,0,0,2,2,1,1,4,3] },
  { t: [5,2,2,2,2,3,2,2,2,2,4,9,3,3,2,4,2,3,3,4,9,6,4,25,9,3,2,3,8,2,3,3,5,2,13,5,4,2,8,6],
    r: [3,1,1,1,1,2,1,1,1,1,2,4,2,2,1,2,1,1,2,2,4,3,1,2,1,0,0,0,0,0,0,0,0,0,2,2,2,1,4,1] },
  { t: [2,0,0,0,0,2,0,0,0,0,1,4,0,0,0,2,0,1,1,0,3,2,1,4,3,0,1,2,2,1,1,1,1,1,4,3,2,1,4,4],
    r: [1,0,0,0,0,1,0,0,0,0,0,1,0,0,0,1,0,0,1,0,1,1,0,1,1,0,0,0,0,0,0,0,0,0,1,1,1,0,2,1] },
  { t: [1,0,0,0,0,0,0,0,0,0,0,4,0,0,0,2,0,0,0,0,3,1,1,2,2,0,0,1,1,0,1,0,1,0,2,3,1,0,4,4],
    r: [1,0,0,0,0,0,0,0,0,0,0,1,0,0,0,1,0,0,0,0,1,0,0,1,1,0,0,0,0,0,0,0,0,0,1,1,0,0,2,1] },
];
const CELL = 6;

document.querySelectorAll(".graph").forEach((graph) => {
  const core = CORES[Number(graph.dataset.core)];
  core.t.forEach((total, i) => {
    const red = core.r[i];
    const col = document.createElement("div");
    col.className = "col";
    const green = document.createElement("div");
    green.className = "seg-g";
    green.style.height = (total - red) * CELL + "px";
    const base = document.createElement("div");
    base.className = "seg-r";
    base.style.height = red * CELL + "px";
    col.append(green, base);
    graph.append(col);
  });
});
```
